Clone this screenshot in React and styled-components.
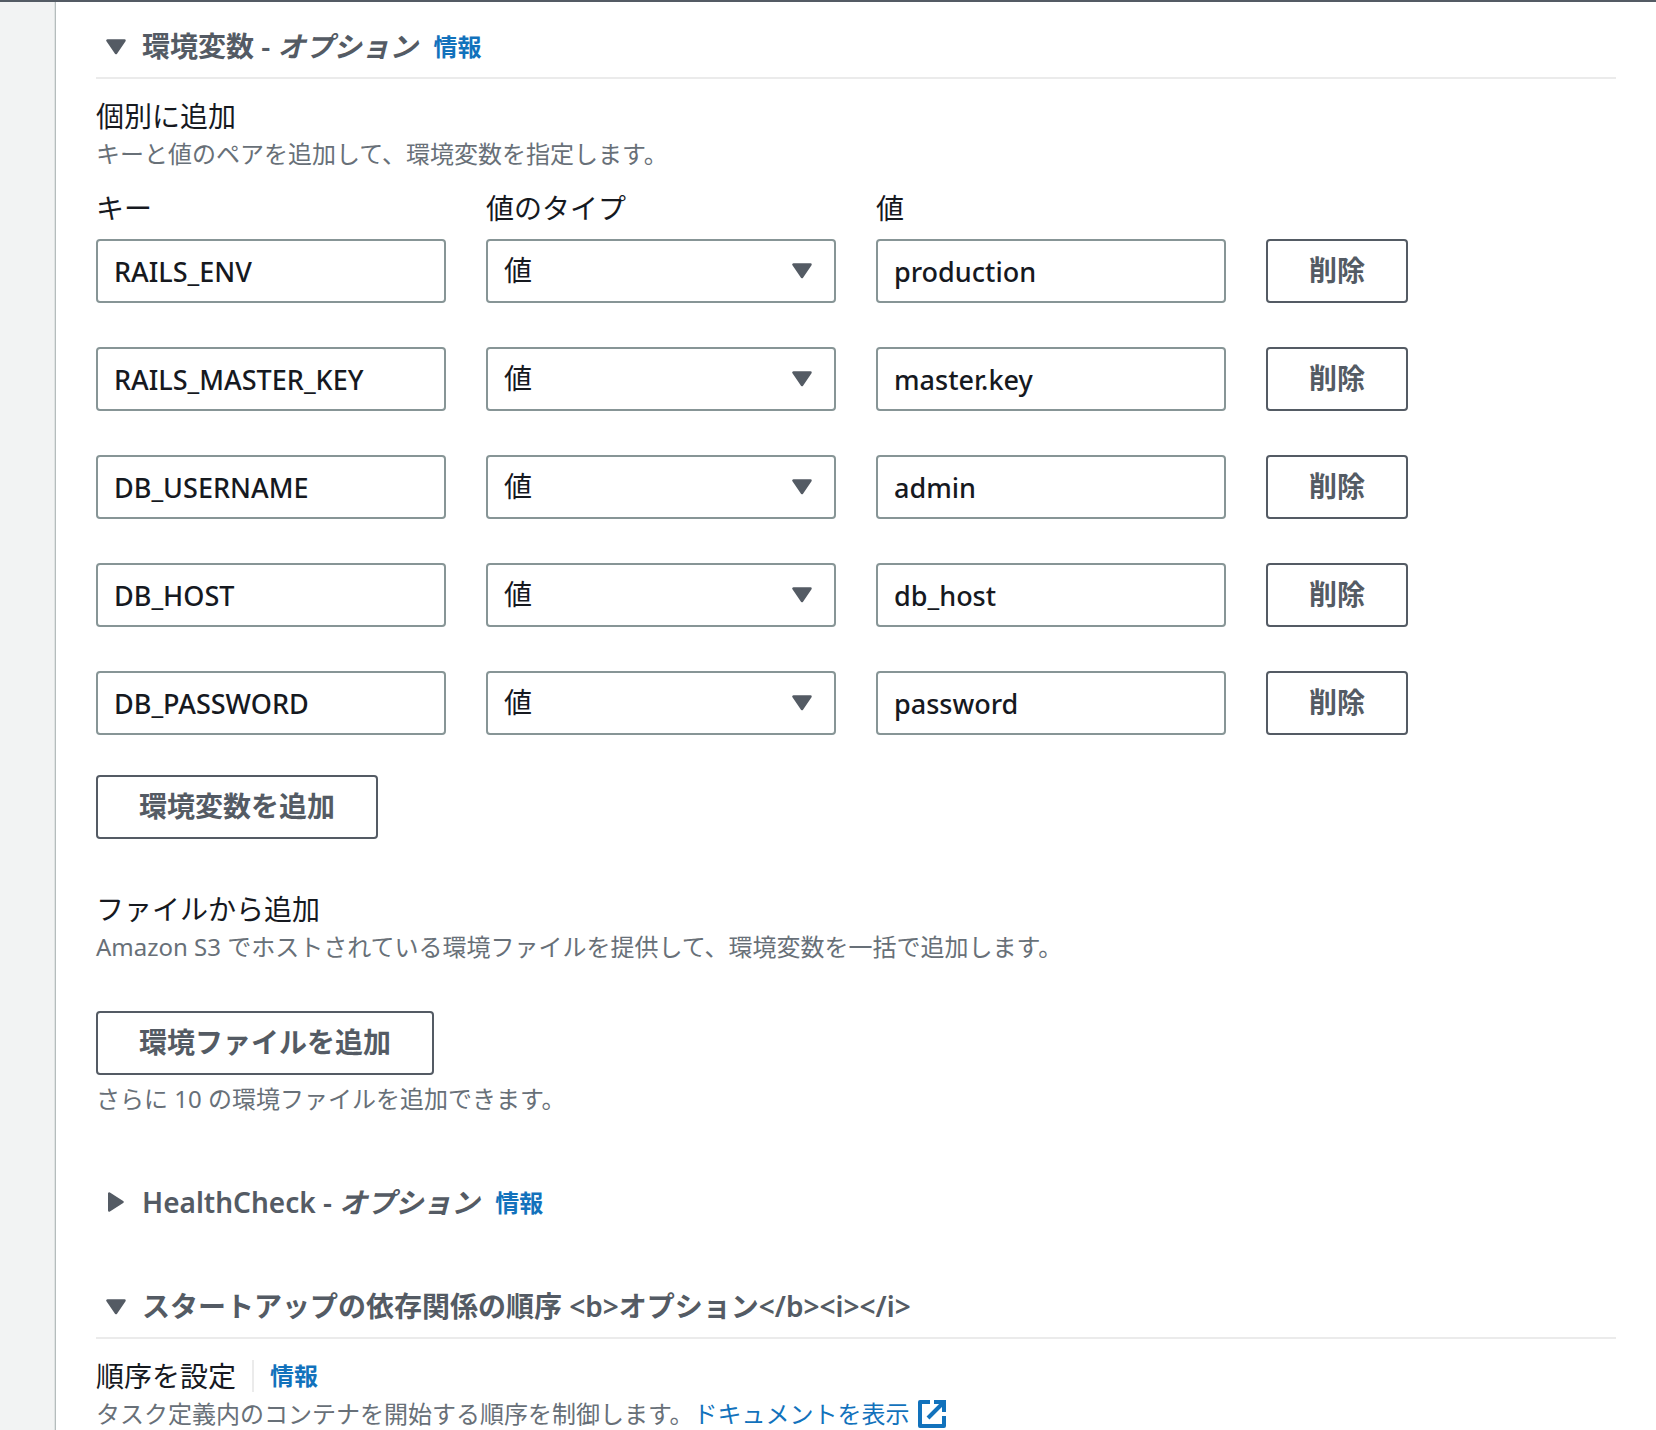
import React, { useState } from 'react';
import styled, { createGlobalStyle } from 'styled-components';

const initialVariables = [
  { id: 1, key: 'RAILS_ENV', type: 'value', value: 'production' },
  { id: 2, key: 'RAILS_MASTER_KEY', type: 'value', value: 'master.key' },
  { id: 3, key: 'DB_USERNAME', type: 'value', value: 'admin' },
  { id: 4, key: 'DB_HOST', type: 'value', value: 'db_host' },
  { id: 5, key: 'DB_PASSWORD', type: 'value', value: 'password' },
];

function Caret({ open = true }) {
  return (
    <svg width="20" height="20" viewBox="0 0 20 20" aria-hidden="true">
      <path
        d={open ? 'M1.5 4.5H18.5L10 17Z' : 'M3.25 1.5V18.5L16.5 10Z'}
        fill="#545b64"
        stroke="#545b64"
        strokeWidth="2.5"
        strokeLinejoin="round"
      />
    </svg>
  );
}

function ExternalIcon() {
  return (
    <svg width="28" height="28" viewBox="0 0 28 28" fill="none" stroke="currentColor" strokeWidth="4" aria-hidden="true">
      <path d="M12 2H2V26H26V16" strokeLinejoin="round" />
      <path d="M16 2H26V12" />
      <path d="M25 3L10 18" />
    </svg>
  );
}

function Section({ title, optional, info, defaultOpen, children }) {
  const [open, setOpen] = useState(defaultOpen);

  return (
    <section>
      <SectionHeader $open={open}>
        <SectionTitle>
          <Toggle type="button" aria-expanded={open} onClick={() => setOpen(!open)}>
            <Caret open={open} />
            <span>
              {title}
              {optional && <> - <em>オプション</em></>}
            </span>
          </Toggle>
        </SectionTitle>
        {info && <InfoLink href="#info">情報</InfoLink>}
      </SectionHeader>
      {open && children && <SectionBody>{children}</SectionBody>}
    </section>
  );
}

function App() {
  const [variables, setVariables] = useState(initialVariables);

  const update = (id, field) => (e) => {
    setVariables(variables.map((v) => (v.id === id ? { ...v, [field]: e.target.value } : v)));
  };

  const remove = (id) => setVariables(variables.filter((v) => v.id !== id));

  const add = () => {
    setVariables([...variables, { id: Date.now(), key: '', type: 'value', value: '' }]);
  };

  return (
    <Page>
      <GlobalStyle />
      <Gutter />
      <Panel>
        <Section title="環境変数" optional info defaultOpen>
          <FieldTitle>個別に追加</FieldTitle>
          <Description>キーと値のペアを追加して、環境変数を指定します。</Description>

          <Labels>
            <span id="key-label">キー</span>
            <span id="type-label">値のタイプ</span>
            <span id="value-label">値</span>
          </Labels>
          <Rows>
            {variables.map((v) => (
              <Row key={v.id}>
                <Input aria-labelledby="key-label" value={v.key} onChange={update(v.id, 'key')} />
                <SelectBox>
                  <Select aria-labelledby="type-label" value={v.type} onChange={update(v.id, 'type')}>
                    <option value="value">値</option>
                    <option value="valueFrom">ValueFrom</option>
                  </Select>
                  <Caret />
                </SelectBox>
                <Input aria-labelledby="value-label" value={v.value} onChange={update(v.id, 'value')} />
                <Button type="button" onClick={() => remove(v.id)}>削除</Button>
              </Row>
            ))}
          </Rows>
          <Button type="button" onClick={add}>環境変数を追加</Button>

          <FileGroup>
            <FieldTitle>ファイルから追加</FieldTitle>
            <Description>
              Amazon S3 でホストされている環境ファイルを提供して、環境変数を一括で追加します。
            </Description>
            <FileAction>
              <Button type="button">環境ファイルを追加</Button>
              <Description>さらに 10 の環境ファイルを追加できます。</Description>
            </FileAction>
          </FileGroup>
        </Section>

        <Section title="HealthCheck" optional info defaultOpen={false} />

        <Section title="スタートアップの依存関係の順序 <b>オプション</b><i></i>" defaultOpen>
          <TitleLine>
            <FieldTitle>順序を設定</FieldTitle>
            <Separator />
            <InfoLink href="#info">情報</InfoLink>
          </TitleLine>
          <Description>
            タスク定義内のコンテナを開始する順序を制御します。
            <DocLink href="#docs">
              ドキュメントを表示
              <ExternalIcon />
            </DocLink>
          </Description>
        </Section>
      </Panel>
    </Page>
  );
}

const GlobalStyle = createGlobalStyle`
  * {
    box-sizing: border-box;
  }

  body {
    margin: 0;
    color: #16191f;
    background: #ffffff;
    font-family: "Noto Sans", "Noto Sans CJK JP", sans-serif;
    font-size: 28px;
    line-height: 44px;
  }

  button, input, select {
    font-family: inherit;
    color: inherit;
  }
`;

const Page = styled.div`
  display: flex;
  height: 100vh;
  overflow-y: auto;
  scrollbar-width: none;
  border-top: 2px solid #545b64;
`;

const Gutter = styled.div`
  flex: 0 0 56px;
  align-self: stretch;
  background: #f2f3f3;
  border-right: 1px solid #b5bcbc;
  box-shadow: inset -1px 0 0 #dfe3e3;
  min-height: max-content;
`;

const Panel = styled.main`
  flex: 1;
  min-width: 0;
  height: max-content;
  display: flex;
  flex-direction: column;
  gap: 40px;
  padding: 13px 40px 0;
`;

const SectionHeader = styled.header`
  display: flex;
  align-items: baseline;
  gap: 16px;
  padding: 9px 0 9px 10px;
  border-bottom: 2px solid ${({ $open }) => ($open ? '#ebebeb' : 'transparent')};
`;

const SectionTitle = styled.h2`
  margin: 0;
  font-size: 28px;
  line-height: 44px;
`;

const Toggle = styled.button`
  display: flex;
  align-items: center;
  gap: 16px;
  padding: 0;
  border: 0;
  background: none;
  color: #545b64;
  font-size: 28px;
  font-weight: 600;
  line-height: 44px;
  text-align: left;
  cursor: pointer;
`;

const SectionBody = styled.div`
  padding: 15px 0 16px;
`;

const InfoLink = styled.a`
  color: #1272bc;
  font-size: 24px;
  font-weight: 700;
  line-height: 32px;
  text-decoration: none;
`;

const FieldTitle = styled.h3`
  margin: 0;
  font-size: 28px;
  font-weight: 400;
  line-height: 44px;
`;

const Description = styled.p`
  margin: 0;
  color: #687078;
  font-size: 24px;
  line-height: 32px;
`;

const Row = styled.div`
  display: grid;
  grid-template-columns: repeat(4, 1fr);
  column-gap: 40px;
  justify-items: start;
`;

const Labels = styled(Row)`
  margin: 16px 0 9px;
`;

const Rows = styled.div`
  display: flex;
  flex-direction: column;
  gap: 44px;
  margin-bottom: 40px;
`;

const Input = styled.input`
  width: 100%;
  height: 64px;
  padding: 0 16px;
  border: 2px solid #879596;
  border-radius: 4px;
  background: #ffffff;
  font-size: 27px;
  font-weight: 500;
`;

const SelectBox = styled.div`
  position: relative;
  width: 100%;

  svg {
    position: absolute;
    top: 21px;
    right: 24px;
    pointer-events: none;
  }
`;

const Select = styled.select`
  display: block;
  width: 100%;
  height: 64px;
  padding: 0 16px 2px;
  border: 2px solid #879596;
  border-radius: 4px;
  background: #ffffff;
  font-size: 28px;
  appearance: none;
`;

const Button = styled.button`
  height: 64px;
  padding: 0 41px 4px;
  border: 2px solid #545b64;
  border-radius: 4px;
  background: #ffffff;
  color: #545b64;
  font-size: 28px;
  font-weight: 700;
  white-space: nowrap;
  cursor: pointer;
`;

const FileGroup = styled.div`
  margin-top: 48px;
`;

const FileAction = styled.div`
  display: flex;
  flex-direction: column;
  align-items: flex-start;
  gap: 8px;
  margin-top: 48px;
`;

const TitleLine = styled.div`
  display: flex;
  align-items: center;
  gap: 16px;
`;

const Separator = styled.span`
  height: 32px;
  border-left: 2px solid #ebebeb;
`;

const DocLink = styled.a`
  display: inline-flex;
  align-items: center;
  gap: 8px;
  color: #1272bc;
  text-decoration: none;
`;

export default App;
